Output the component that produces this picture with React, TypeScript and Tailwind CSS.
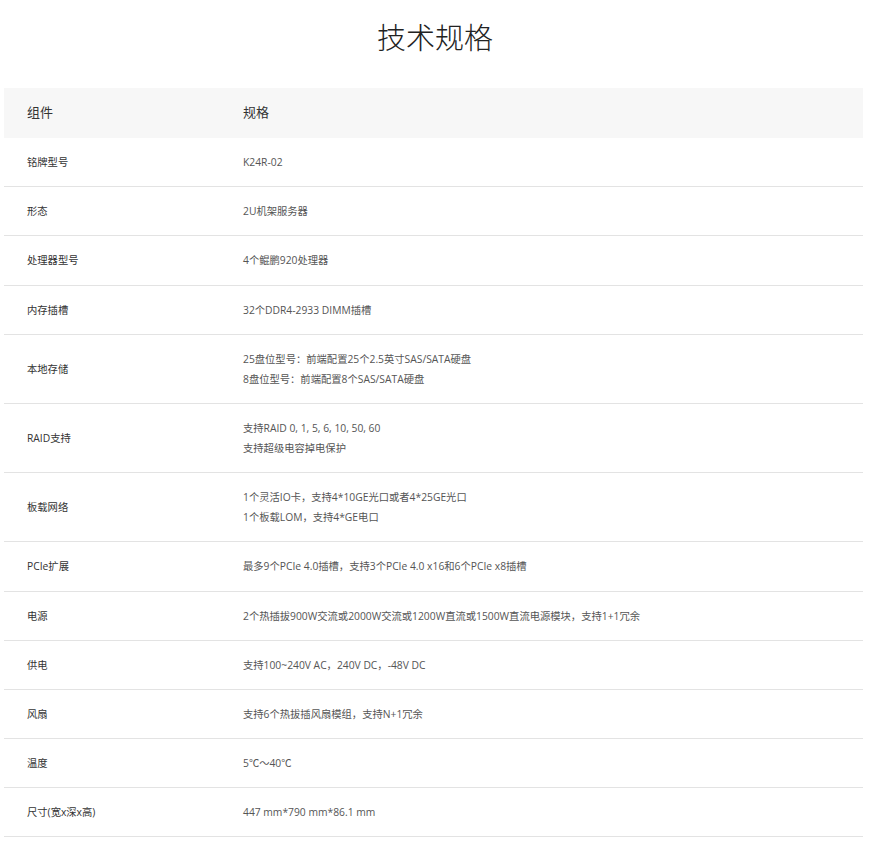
const specs: { name: string; value: string[] }[] = [
  { name: "铭牌型号", value: ["K24R-02"] },
  { name: "形态", value: ["2U机架服务器"] },
  { name: "处理器型号", value: ["4个鲲鹏920处理器"] },
  { name: "内存插槽", value: ["32个DDR4-2933 DIMM插槽"] },
  {
    name: "本地存储",
    value: ["25盘位型号：前端配置25个2.5英寸SAS/SATA硬盘", "8盘位型号：前端配置8个SAS/SATA硬盘"],
  },
  { name: "RAID支持", value: ["支持RAID 0, 1, 5, 6, 10, 50, 60", "支持超级电容掉电保护"] },
  {
    name: "板载网络",
    value: ["1个灵活IO卡，支持4*10GE光口或者4*25GE光口", "1个板载LOM，支持4*GE电口"],
  },
  { name: "PCIe扩展", value: ["最多9个PCIe 4.0插槽，支持3个PCIe 4.0 x16和6个PCIe x8插槽"] },
  {
    name: "电源",
    value: ["2个热插拔900W交流或2000W交流或1200W直流或1500W直流电源模块，支持1+1冗余"],
  },
  { name: "供电", value: ["支持100~240V AC，240V DC，-48V DC"] },
  { name: "风扇", value: ["支持6个热拔插风扇模组，支持N+1冗余"] },
  { name: "温度", value: ["5℃～40℃"] },
  { name: "尺寸(宽x深x高)", value: ["447 mm*790 mm*86.1 mm"] },
]

export default function App() {
  return (
    <div
      className="min-h-screen bg-white text-[#333]"
      style={{ fontFamily: '"Open Sans", "Noto Sans CJK SC", sans-serif' }}
    >
      <h1 className="pt-[18px] text-center text-[29px] font-light leading-[40px] text-[#222]">技术规格</h1>

      <div className="ml-[4px] mt-[30px] w-[859px]">
        <div className="flex h-[50px] items-center bg-[#f7f7f7] text-[13px] text-[#333]">
          <div className="w-[216px] pl-[23px]">组件</div>
          <div className="flex-1 pl-[23px]">规格</div>
        </div>

        {specs.map((row) => (
          <div
            key={row.name}
            className="flex items-center border-b border-[#e3e3e3] py-[14.1px] text-[10.3px] leading-[20px]"
          >
            <div className="w-[216px] pl-[23px] text-[#333]">{row.name}</div>
            <div className="flex-1 pl-[23px] text-[#555]">
              {row.value.map((line) => (
                <div key={line}>{line}</div>
              ))}
            </div>
          </div>
        ))}
      </div>
    </div>
  )
}
